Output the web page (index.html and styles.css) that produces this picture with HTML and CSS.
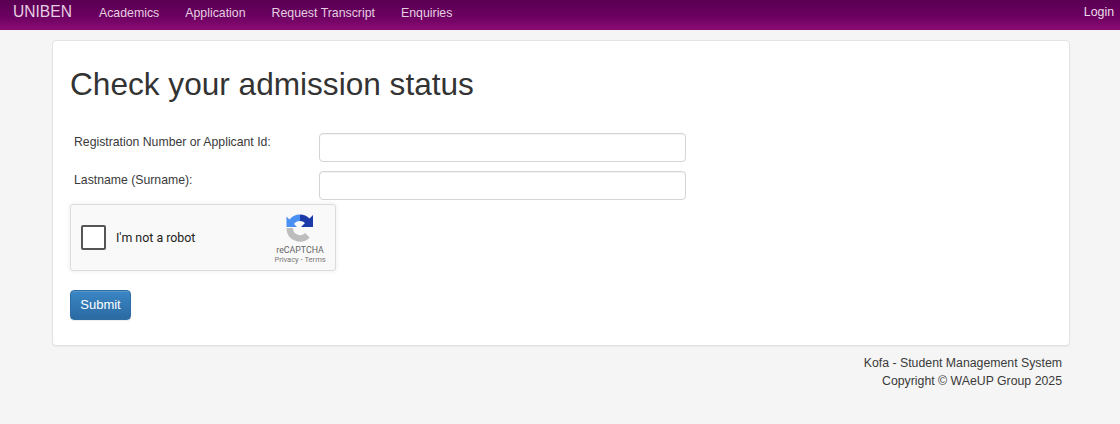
FILE: index.html
```html
<!DOCTYPE html>
<html lang="en">
<head>
<meta charset="utf-8">
<title>Check your admission status</title>
<link rel="stylesheet" href="styles.css">
</head>
<body>
<nav class="navbar">
  <a class="brand" href="#">UNIBEN</a>
  <ul class="nav-links">
    <li><a href="#">Academics</a></li>
    <li><a href="#">Application</a></li>
    <li><a href="#">Request Transcript</a></li>
    <li><a href="#">Enquiries</a></li>
  </ul>
  <a class="login" href="#">Login</a>
</nav>
<main class="card">
  <h1 class="title">Check your admission status</h1>
  <form class="form">
    <div class="row">
      <label class="label" for="reg">Registration Number or Applicant Id:</label>
      <input class="input" id="reg" type="text">
    </div>
    <div class="row">
      <label class="label" for="last">Lastname (Surname):</label>
      <input class="input" id="last" type="text">
    </div>
    <div class="captcha">
      <span class="check"></span>
      <span class="robot">I'm not a robot</span>
      <div class="brandbox">
        <svg class="rc-icon" viewBox="0 0 28 28" width="28" height="28" aria-hidden="true">
          <path d="M14 .5A13.5 13.5 0 0 0 3.5 5.5L.5 2.5V13H11L8 10A7 7 0 0 1 14 7Z" fill="#4a90f2"/>
          <path d="M14 .5A13.5 13.5 0 0 1 23.5 4.5L27 1V13H15L19 9A7 7 0 0 0 14 7Z" fill="#1c3aa9"/>
          <path d="M.5 14H7A7 7 0 0 0 19 19L23.7 23.5A13.5 13.5 0 0 1 .5 14Z" fill="#bdbdbd"/>
        </svg>
        <span class="rc-name">reCAPTCHA</span>
        <span class="rc-links">Privacy <span class="dot">·</span> Terms</span>
      </div>
    </div>
    <button class="submit" type="button">Submit</button>
  </form>
</main>
<footer class="footer">
  <div>Kofa - Student Management System</div>
  <div>Copyright © WAeUP Group 2025</div>
</footer>
</body>
</html>
```
FILE: styles.css
```css
* { box-sizing: border-box; }
html, body { margin: 0; padding: 0; }
body {
  background: #f5f5f5;
  color: #3a3a3a;
  font-family: "Liberation Sans", Arial, sans-serif;
  font-size: 14px;
  line-height: 20px;
  height: 424px;
  overflow: hidden;
}
a { text-decoration: none; }
.navbar {
  height: 30px;
  display: flex;
  align-items: center;
  padding: 0 6px 6px 13px;
  background: linear-gradient(to bottom, #590052 0%, #6b0060 55%, #850a70 90%, #870a70 100%);
}
.brand { color: #e6cfe2; font-size: 15.6px; line-height: 20px; }
.nav-links {
  list-style: none;
  display: flex;
  gap: 26px;
  margin: 0 0 0 27px;
  padding: 0;
  flex: 1;
}
.nav-links a, .login { color: #e6cfe2; font-size: 12.33px; }
.login { color: #eedcea; }
.card {
  width: 1018px;
  height: 306px;
  margin: 10px 0 0 52px;
  padding: 0 17px;
  background: #fff;
  border: 1px solid #e3e3e3;
  border-radius: 4px;
  box-shadow: 0 1px 1px rgba(0,0,0,.05);
}
.title {
  margin: 25px 0 31px;
  font-size: 31.6px;
  font-weight: 400;
  line-height: 36px;
  color: #333;
}
.form { display: flex; flex-direction: column; align-items: flex-start; }
.row { display: flex; height: 29px; margin-bottom: 9px; }
.label { width: 249px; padding: 0 0 0 4px; font-size: 12.25px; line-height: 18px; }
.input {
  width: 367px;
  height: 29px;
  border: 1px solid #d4d4d4;
  border-radius: 4px;
  background: #fff;
  box-shadow: inset 0 1px 1px rgba(0,0,0,.05);
}
.captcha {
  width: 266px;
  height: 67px;
  margin-top: -5px;
  display: flex;
  align-items: center;
  padding: 0 10px;
  background: #f9f9f9;
  border: 1px solid #dcdcdc;
  border-radius: 3px;
  box-shadow: 0 0 4px 1px rgba(0,0,0,.06);
}
.check {
  width: 25px;
  height: 25px;
  background: #fff;
  border: 2px solid #555;
  border-radius: 2px;
}
.robot { margin-left: 10px; flex: 1; font-family: Roboto, "Liberation Sans", sans-serif; font-size: 12.4px; color: #222; }
.brandbox {
  width: 50px;
  align-self: flex-start;
  display: flex;
  flex-direction: column;
  align-items: center;
  padding-top: 9px;
}
.rc-icon { display: block; margin-bottom: 3px; }
.rc-name { font-family: Roboto, "Liberation Sans", sans-serif; font-size: 8.8px; line-height: 10px; color: #666; }
.rc-links { font-family: Roboto, "Liberation Sans", sans-serif; font-size: 7.5px; line-height: 10px; color: #777; white-space: nowrap; }
.dot { font-weight: 700; }
.submit {
  margin-top: 19px;
  width: 61px;
  height: 30px;
  color: #fff;
  font: 13px/18px "Liberation Sans", Arial, sans-serif;
  background: linear-gradient(to bottom, #3a86c4 0%, #2b6aa3 100%);
  border: 1px solid #2e6da4;
  border-radius: 4px;
  box-shadow: inset 0 1px 0 rgba(255,255,255,.15), 0 1px 1px rgba(0,0,0,.075);
}
.footer {
  width: 1062px;
  margin-top: 8px;
  text-align: right;
  font-size: 12.3px;
  line-height: 18px;
}
```
